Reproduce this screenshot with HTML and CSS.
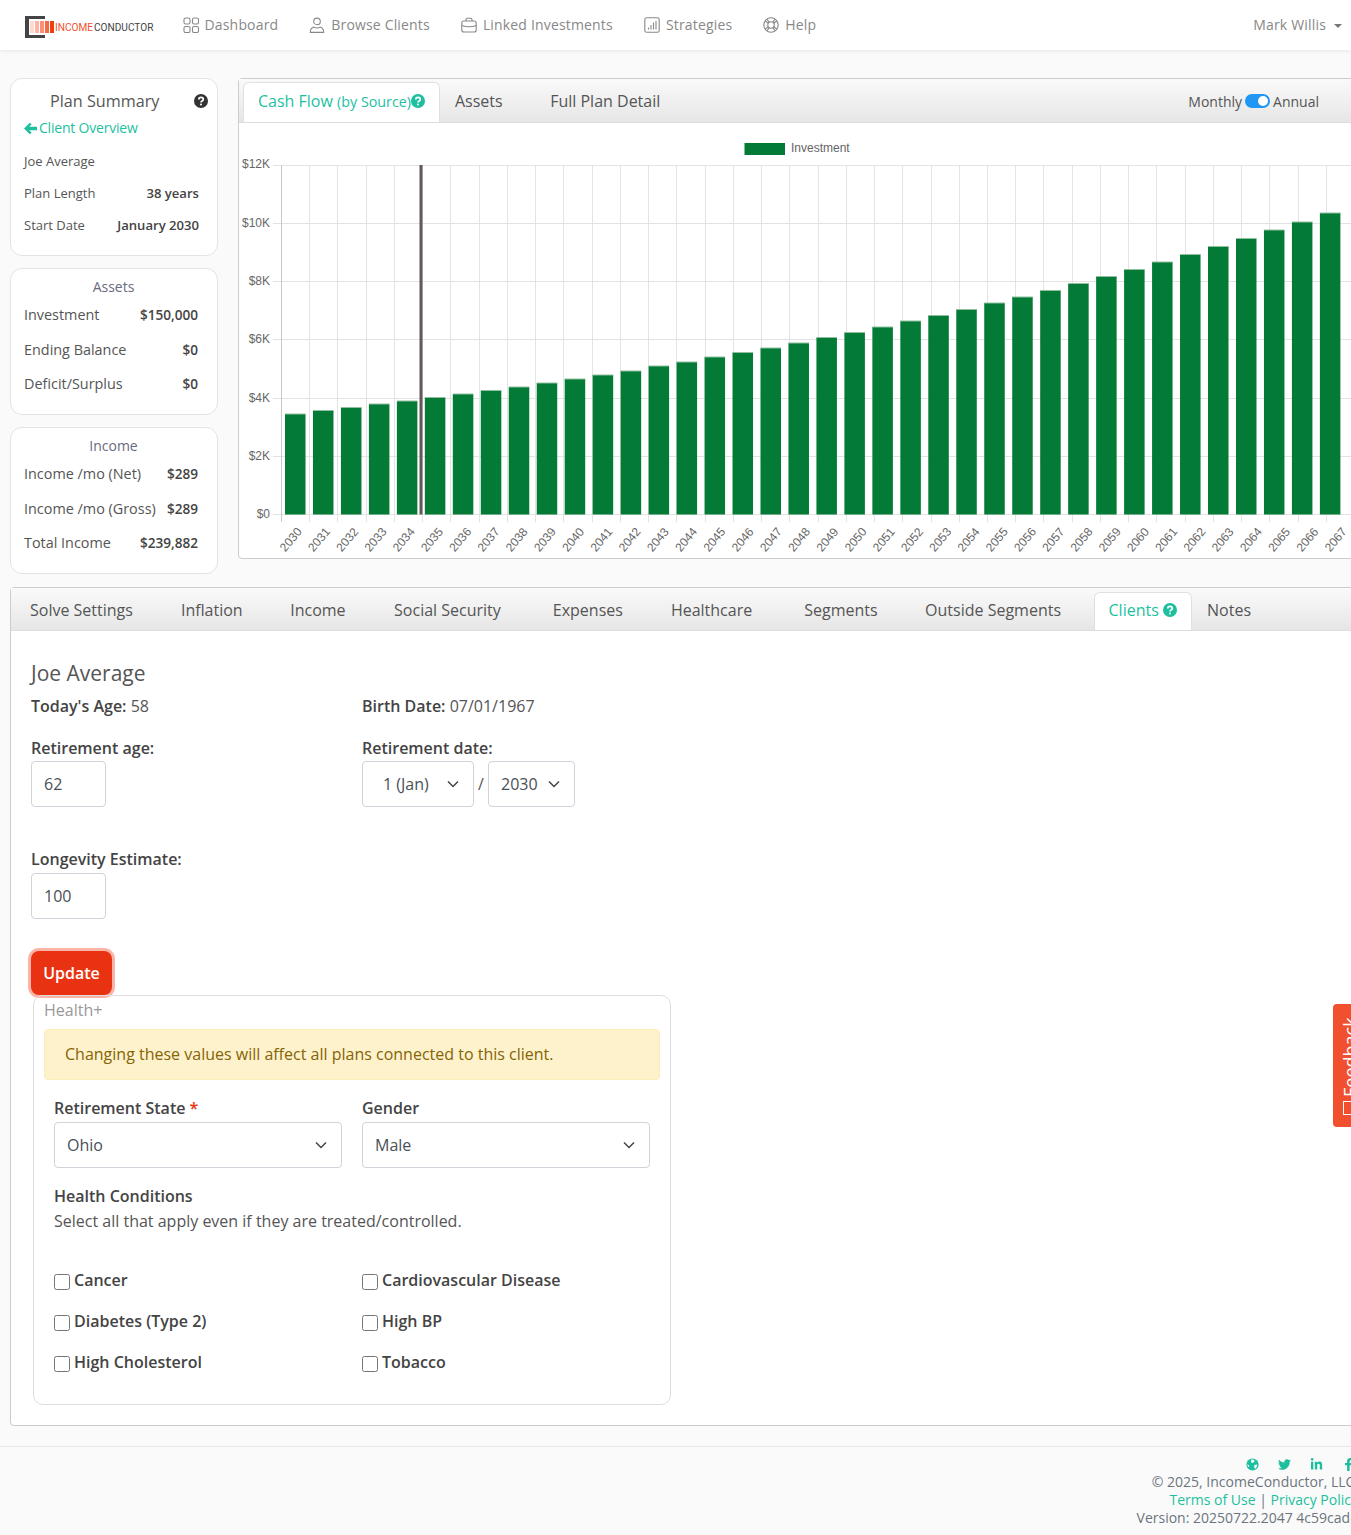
FILE: index.html
```html
<!DOCTYPE html>
<html lang="en">
<head>
    <meta charset="utf-8">
    <meta name="viewport" content="width=device-width, initial-scale=1.0">
    <title>Income Conductor</title>
    <link rel="stylesheet" href="styles.css">
</head>
<body>
    <nav class="navbar">
        <a class="logo">
            <span class="logo-mark"><i class="b1"></i><i class="b2"></i><i class="b3"></i><i class="b4"></i><i class="b5"></i></span>
            <span class="logo-income">INCOME</span><span class="logo-conductor">CONDUCTOR</span>
        </a>
        <a class="nav-link">
            <svg class="nav-icon" viewBox="0 0 16 16"><rect x="1" y="1" width="6" height="6" rx="1.6"/><rect x="9.5" y="1" width="6" height="6" rx="1.6"/><rect x="1" y="9.5" width="6" height="6" rx="1.6"/><rect x="9.5" y="9.5" width="6" height="6" rx="1.6"/></svg>
            Dashboard
        </a>
        <a class="nav-link">
            <svg class="nav-icon" viewBox="0 0 16 16"><circle cx="8" cy="4.4" r="3.3"/><path d="M1.3 15.4c-.5-3 2.3-5.3 3.6-5.3.9.6 1.9.9 3.1.9s2.2-.3 3.1-.9c1.3 0 4.1 2.3 3.6 5.3z"/></svg>
            Browse Clients
        </a>
        <a class="nav-link">
            <svg class="nav-icon" viewBox="0 0 16 16"><rect x=".8" y="4" width="14.4" height="11" rx="2"/><path d="M5 4V2.5C5 1.7 5.6 1.2 6.3 1.2h3.4c.7 0 1.3.5 1.3 1.3V4M.8 8.5c4.5 1.6 9.9 1.6 14.4 0"/></svg>
            Linked Investments
        </a>
        <a class="nav-link">
            <svg class="nav-icon" viewBox="0 0 16 16"><rect x=".8" y=".8" width="14.4" height="14.4" rx="1.8"/><path d="M4.5 12.5v-2M7 12.5V8M9.5 12.5v-7M12 12.5V4"/></svg>
            Strategies
        </a>
        <a class="nav-link">
            <svg class="nav-icon" viewBox="0 0 16 16"><circle cx="8" cy="8" r="7.2"/><circle cx="8" cy="8" r="3.2"/><path d="M2.2 4l3.2 2.2M4 2.2l2.2 3.2M13.8 4l-3.2 2.2M12 2.2L9.8 5.4M2.2 12l3.2-2.2M4 13.8l2.2-3.2M13.8 12l-3.2-2.2M12 13.8l-2.2-3.2"/></svg>
            Help
        </a>
        <a class="nav-user">Mark Willis <span class="caret"></span></a>
    </nav>

    <div class="content">
        <div class="top-row">
            <aside class="sidebar">
                <section class="card summary-card">
                    <div class="summary-head">
                        <h3>Plan Summary</h3>
                        <svg class="help-icon dark" viewBox="0 0 16 16"><circle cx="8" cy="8" r="8"/><path d="M5.5 6.2c0-3.1 5.1-3.1 5.1 0 0 1.9-2.6 1.8-2.6 3.4"/><circle class="dot" cx="8" cy="12" r="1.1"/></svg>
                    </div>
                    <a class="back-link"><svg class="back-arrow" viewBox="0 0 14 14"><path d="M0 7l6.3-6.3 1.9 1.9L5.6 5H14v4H5.6l2.6 2.4-1.9 1.9z"/></svg>Client Overview</a>
                    <div class="summary-row">Joe Average</div>
                    <div class="summary-row">Plan Length <b>38 years</b></div>
                    <div class="summary-row">Start Date <b>January 2030</b></div>
                </section>
                <section class="card stat-card">
                    <h4>Assets</h4>
                    <div class="stat-row">Investment <b>$150,000</b></div>
                    <div class="stat-row">Ending Balance <b>$0</b></div>
                    <div class="stat-row">Deficit/Surplus <b>$0</b></div>
                </section>
                <section class="card stat-card">
                    <h4>Income</h4>
                    <div class="stat-row">Income /mo (Net) <b>$289</b></div>
                    <div class="stat-row">Income /mo (Gross) <b>$289</b></div>
                    <div class="stat-row">Total Income <b>$239,882</b></div>
                </section>
            </aside>

            <section class="panel chart-panel">
                <div class="tabbar tabbar-top">
                    <a class="tab active cash-tab">Cash Flow <small>(by Source)</small><svg class="help-icon" viewBox="0 0 16 16"><circle cx="8" cy="8" r="8"/><path d="M5.5 6.2c0-3.1 5.1-3.1 5.1 0 0 1.9-2.6 1.8-2.6 3.4"/><circle class="dot" cx="8" cy="12" r="1.1"/></svg></a>
                    <a class="tab assets-tab">Assets</a>
                    <a class="tab">Full Plan Detail</a>
                    <div class="period-toggle">Monthly <span class="switch"><i></i></span> Annual</div>
                </div>
                <div id="chart" class="chart"></div>
            </section>
        </div>

        <section class="panel settings-panel">
            <div class="tabbar tabbar-bottom">
                <a class="tab t-solve">Solve Settings</a>
                <a class="tab t-inflation">Inflation</a>
                <a class="tab t-income">Income</a>
                <a class="tab t-social">Social Security</a>
                <a class="tab t-expenses">Expenses</a>
                <a class="tab t-health">Healthcare</a>
                <a class="tab t-segments">Segments</a>
                <a class="tab t-outside">Outside Segments</a>
                <a class="tab active t-clients">Clients <svg class="help-icon" viewBox="0 0 16 16"><circle cx="8" cy="8" r="8"/><path d="M5.5 6.2c0-3.1 5.1-3.1 5.1 0 0 1.9-2.6 1.8-2.6 3.4"/><circle class="dot" cx="8" cy="12" r="1.1"/></svg></a>
                <a class="tab t-notes">Notes</a>
            </div>
            <div class="client-form">
                <h2>Joe Average</h2>
                <div class="form-line info-line">
                    <div><b>Today's Age:</b> 58</div>
                    <div><b>Birth Date:</b> 07/01/1967</div>
                </div>
                <div class="form-line retire-line">
                    <div>
                        <label>Retirement age:</label>
                        <input class="field short" type="text" value="62">
                    </div>
                    <div>
                        <label>Retirement date:</label>
                        <div class="date-selects">
                            <div class="field select month-select">1 (Jan)<svg class="chev" viewBox="0 0 12 8"><path d="M1 1.5l5 5 5-5"/></svg></div>
                            <span class="slash">/</span>
                            <div class="field select year-select">2030<svg class="chev" viewBox="0 0 12 8"><path d="M1 1.5l5 5 5-5"/></svg></div>
                        </div>
                    </div>
                </div>
                <div class="longevity">
                    <label>Longevity Estimate:</label>
                    <input class="field short" type="text" value="100">
                </div>
                <button class="btn-update" type="button">Update</button>
                <fieldset class="health-box">
                    <div class="health-title">Health+</div>
                    <div class="alert">Changing these values will affect all plans connected to this client.</div>
                    <div class="health-grid">
                        <div>
                            <label>Retirement State <span class="req">*</span></label>
                            <div class="field select">Ohio<svg class="chev" viewBox="0 0 12 8"><path d="M1 1.5l5 5 5-5"/></svg></div>
                        </div>
                        <div>
                            <label>Gender</label>
                            <div class="field select">Male<svg class="chev" viewBox="0 0 12 8"><path d="M1 1.5l5 5 5-5"/></svg></div>
                        </div>
                    </div>
                    <div class="conditions">
                        <b>Health Conditions</b>
                        <p>Select all that apply even if they are treated/controlled.</p>
                    </div>
                    <div class="check-grid">
                        <label class="check"><input type="checkbox">Cancer</label>
                        <label class="check"><input type="checkbox">Cardiovascular Disease</label>
                        <label class="check"><input type="checkbox">Diabetes (Type 2)</label>
                        <label class="check"><input type="checkbox">High BP</label>
                        <label class="check"><input type="checkbox">High Cholesterol</label>
                        <label class="check"><input type="checkbox">Tobacco</label>
                    </div>
                </fieldset>
            </div>
        </section>
    </div>

    <footer class="footer">
        <div class="social">
            <svg viewBox="0 0 16 16"><circle cx="8" cy="8" r="7.5"/><path class="cut" d="M7 1.5l3 1 .5 2-2.5 1.5-2-1zM10.5 8.500L14 8l-1 3.5-2 2-1-3zM1.5 7.5l2 1.5.5 2-1.5-.5z"/></svg>
            <svg viewBox="0 0 512 512"><path d="M459.37 151.716c.325 4.548.325 9.097.325 13.645 0 138.72-105.583 298.558-298.558 298.558-59.452 0-114.68-17.219-161.137-47.106 8.447.974 16.568 1.299 25.34 1.299 49.055 0 94.213-16.568 130.274-44.832-46.132-.975-84.792-31.188-98.112-72.772 6.498.974 12.995 1.624 19.818 1.624 9.421 0 18.843-1.3 27.614-3.573-48.081-9.747-84.143-51.98-84.143-102.985v-1.299c13.969 7.797 30.214 12.67 47.431 13.319-28.264-18.843-46.781-51.005-46.781-87.391 0-19.492 5.197-37.36 14.294-52.954 51.655 63.675 129.3 105.258 216.365 109.807-1.624-7.797-2.599-15.918-2.599-24.04 0-57.828 46.782-104.934 104.934-104.934 30.213 0 57.502 12.67 76.67 33.137 23.715-4.548 46.456-13.32 66.599-25.34-7.798 24.366-24.366 44.833-46.132 57.827 21.117-2.273 41.584-8.122 60.426-16.243-14.292 20.791-32.161 39.308-52.628 54.253z"/></svg>
            <svg viewBox="0 0 448 512"><path d="M100.28 448H7.4V148.9h92.88zM53.79 108.1C24.09 108.1 0 83.5 0 53.8a53.79 53.79 0 0 1 107.58 0c0 29.7-24.1 54.3-53.79 54.3zM447.9 448h-92.68V302.4c0-34.7-.7-79.2-48.29-79.2-48.29 0-55.69 37.7-55.69 76.7V448h-92.78V148.9h89.08v40.8h1.3c12.4-23.5 42.69-48.3 87.88-48.3 94 0 111.28 61.9 111.28 142.3V448z"/></svg>
            <svg viewBox="0 0 320 512"><path d="M279.14 288l14.22-92.66h-88.91v-60.13c0-25.35 12.42-50.06 52.24-50.06h40.42V6.26S260.43 0 225.36 0c-73.22 0-121.08 44.38-121.08 124.72v70.62H22.89V288h81.39v224h100.17V288z"/></svg>
        </div>
        <div>© 2025, IncomeConductor, LLC.</div>
        <div><a>Terms of Use</a> | <a>Privacy Policy</a></div>
        <div>Version: 20250722.2047 4c59cade</div>
    </footer>

    <a class="feedback"><span class="feedback-box"></span>Feedback</a>

    <script src="chart.js"></script>
</body>
</html>
```

FILE: styles.css
```css
* {
    box-sizing: border-box;
}

html, body {
    overflow-x: hidden;
}

body {
    position: relative;
    margin: 0;
    width: 1351px;
    min-height: 1535px;
    background-color: #fafafa;
    font-family: "Open Sans", sans-serif;
    font-size: 16px;
    color: #555;
}

/* navbar */
.navbar {
    display: flex;
    align-items: center;
    height: 50px;
    padding-left: 25px;
    background-color: #fff;
    box-shadow: 0 1px 4px rgba(0, 0, 0, 0.08);
    width: 1351px;
}

.logo {
    display: flex;
    align-items: center;
    width: 157.5px;
    margin-top: 4px;
    font-family: Roboto, sans-serif;
    font-size: 10.1px;
    white-space: nowrap;
}

.logo-mark {
    display: flex;
    gap: 1px;
    align-items: center;
    width: 30px;
    height: 22px;
    padding-left: 5px;
    background: linear-gradient(#444, #444) left top / 20px 3px no-repeat,
        linear-gradient(#444, #444) left bottom / 20px 3px no-repeat,
        linear-gradient(#444, #444) left top / 4px 22px no-repeat;
}

.logo-mark i {
    display: block;
    flex-shrink: 0;
    width: 4px;
    height: 12px;
}

.logo-mark .b1 { background-color: #fdd9cf; }
.logo-mark .b2 { background-color: #fcb5a2; }
.logo-mark .b3 { background-color: #fa9176; }
.logo-mark .b4 { background-color: #f66a43; }
.logo-mark .b5 { background-color: #ef3e12; }

.logo-income {
    color: #f0512d;
    margin-right: 1px;
}

.logo-conductor {
    color: #444;
}

.nav-link {
    display: flex;
    align-items: center;
    gap: 6px;
    margin-right: 31px;
    padding-bottom: 2px;
    font-size: 14px;
    letter-spacing: 0.17px;
    color: #888;
    white-space: nowrap;
}

.nav-icon {
    width: 16px;
    height: 16px;
    margin-top: 2px;
    fill: none;
    stroke: #888;
    stroke-width: 1.1;
}

.nav-user {
    margin-left: auto;
    margin-right: 9px;
    padding-bottom: 2px;
    font-size: 14px;
    letter-spacing: 0.2px;
    color: #888;
}

.caret {
    display: inline-block;
    margin-left: 4px;
    vertical-align: 2px;
    border-top: 4px solid #777;
    border-left: 4px solid transparent;
    border-right: 4px solid transparent;
}

/* page */
.content {
    padding: 28px 0 0 10px;
    width: 1420px;
}

.top-row {
    display: flex;
    gap: 20px;
}

.sidebar {
    width: 208px;
    flex-shrink: 0;
}

.card {
    background-color: #fff;
    border: 1px solid #e3e3e3;
    border-radius: 12px;
    padding: 0 18px 0 13px;
    margin-bottom: 12px;
}

.card:last-child {
    margin-bottom: 0;
}

.summary-card {
    height: 178px;
}

.summary-head {
    display: flex;
    align-items: center;
    justify-content: space-between;
    padding: 10px 0 0 26px;
    margin-right: -9px;
}

.summary-head h3 {
    margin: 0;
    font-size: 16.2px;
    font-weight: 400;
    line-height: 24px;
}

.help-icon {
    width: 14px;
    height: 14px;
    fill: #1dbf9f;
    stroke: #fff;
    stroke-width: 2;
    flex-shrink: 0;
}

.help-icon circle:first-child {
    stroke: none;
}

.help-icon path {
    fill: none;
}

.help-icon .dot {
    fill: #fff;
    stroke: none;
}

.help-icon.dark {
    fill: #333;
}

.back-link {
    display: flex;
    align-items: center;
    gap: 2px;
    font-size: 14px;
    line-height: 20px;
    letter-spacing: -0.2px;
    color: #1dbf9f;
    margin-top: 5px;
}

.back-arrow {
    width: 13px;
    height: 13px;
    fill: #1dbf9f;
}

.summary-row {
    display: flex;
    justify-content: space-between;
    font-size: 13px;
    line-height: 18px;
    margin-top: 14px;
}

.summary-row b, .stat-row b {
    font-weight: 600;
    color: #444;
}

.summary-row b {
    font-size: 13.1px;
}

.stat-card {
    height: 147px;
    padding: 8px 19px 0 13px;
}

.stat-card h4 {
    margin: 0 0 8px;
    font-size: 14px;
    font-weight: 400;
    line-height: 20px;
    text-align: center;
    color: #6a6a80;
    padding-left: 5px;
}

.stat-row {
    display: flex;
    justify-content: space-between;
    font-size: 14.4px;
    line-height: 20px;
    margin-bottom: 14.5px;
    white-space: nowrap;
}

.stat-row b {
    font-size: 13.6px;
}

.panel {
    background-color: #fff;
    border: 1px solid #ccc;
    border-radius: 4px;
}

.chart-panel {
    width: 1180px;
    height: 481px;
    flex-shrink: 0;
}

.tabbar {
    display: flex;
    height: 43px;
    background: linear-gradient(#fafafa, #e6e6e6);
    border-bottom: 1px solid #ddd;
    font-size: 16px;
    white-space: nowrap;
}

.tab {
    display: block;
    line-height: 44px;
    color: #555;
}

.tab.active {
    background-color: #fff;
    color: #1dbf9f;
    border: 1px solid #e0e0e0;
    border-bottom: none;
    border-radius: 6px 6px 0 0;
}

.tabbar-top {
    height: 44px;
    padding-left: 4px;
    align-items: flex-end;
}

.tabbar-top .tab {
    height: 39px;
    line-height: 37px;
}

.tabbar-top .tab.active {
    height: 40px;
    width: 197px;
    padding-left: 14px;
    line-height: 36px;
}

.cash-tab small {
    font-size: 14.3px;
}

.cash-tab .help-icon {
    vertical-align: -1px;
}

.assets-tab {
    margin-left: 15px;
    margin-right: 47.5px;
}

.period-toggle {
    display: flex;
    align-items: center;
    gap: 3px;
    margin-left: auto;
    margin-right: 98px;
    height: 42px;
    font-size: 14px;
    color: #555;
}

.switch {
    position: relative;
    display: block;
    width: 25px;
    height: 14px;
    border-radius: 7px;
    background-color: #2196f3;
}

.switch i {
    position: absolute;
    top: 2px;
    right: 2px;
    width: 10px;
    height: 10px;
    border-radius: 50%;
    background-color: #fff;
}

.chart svg {
    display: block;
}

.settings-panel {
    margin-top: 13px;
    height: 839px;
}

.tabbar-bottom {
    padding-left: 19px;
    align-items: flex-end;
}

.tabbar-bottom .tab {
    height: 42px;
}

.tabbar-bottom .tab.active {
    height: 38px;
    line-height: 34px;
    padding: 0 13px 0 14px;
    width: 98px;
}

.t-solve, .t-expenses { margin-right: 48px; }
.t-inflation, .t-segments { margin-right: 47.5px; }
.t-income { margin-right: 48.5px; }
.t-social, .t-health { margin-right: 52px; }
.t-outside { margin-right: 32.5px; }
.t-clients { margin-right: 15.5px; }

.t-clients .help-icon {
    vertical-align: -1px;
}

.client-form {
    padding: 26px 0 0 20px;
    font-size: 16px;
}

.client-form h2 {
    margin: 0 0 5px;
    font-size: 21px;
    font-weight: 400;
    line-height: 32px;
}

.client-form b, .client-form label {
    font-weight: 600;
    color: #444;
}

.form-line {
    display: grid;
    grid-template-columns: 331px 1fr;
}

.info-line {
    line-height: 24px;
}

.retire-line {
    margin-top: 18px;
}

.client-form label {
    display: block;
    line-height: 24px;
    margin-bottom: 1px;
}

.field {
    display: block;
    height: 46px;
    padding: 0 14px 0 12px;
    border: 1px solid #ced4da;
    border-radius: 4px;
    background-color: #fff;
    font-family: inherit;
    font-size: 16px;
    color: #495057;
}

.short {
    width: 75px;
}

.select {
    display: flex;
    align-items: center;
    justify-content: space-between;
}

.chev {
    width: 12px;
    height: 8px;
    fill: none;
    stroke: #444;
    stroke-width: 1.5;
}

.date-selects {
    display: flex;
    align-items: center;
}

.month-select {
    width: 112px;
    padding: 0 14px 0 20px;
}

.year-select {
    width: 87px;
    padding: 0 14px 0 12px;
}

.slash {
    width: 14px;
    text-align: center;
}

.longevity {
    margin-top: 40px;
}

.longevity label {
    margin-bottom: 2px;
}

.btn-update {
    display: block;
    width: 81px;
    height: 44px;
    margin: 32px 0 0 0;
    padding: 0;
    border: none;
    border-radius: 8px;
    background-color: #e83211;
    box-shadow: 0 0 0 3px #fdb4a8;
    color: #fff;
    font-family: inherit;
    font-size: 16px;
    font-weight: 600;
}

.health-box {
    width: 638px;
    height: 410px;
    margin: 0 0 0 2px;
    padding: 2px 10px 0;
    border: 1px solid #ddd;
    border-radius: 10px;
}

.health-title {
    line-height: 24px;
    color: #999;
}

.alert {
    height: 51px;
    margin-top: 7px;
    padding-left: 20px;
    line-height: 49px;
    background-color: #fef2cd;
    border: 1px solid #fdedb9;
    border-radius: 4px;
    color: #856404;
}

.health-grid {
    display: grid;
    grid-template-columns: 288px 288px;
    gap: 20px;
    margin: 16px 0 0 10px;
}

.health-grid label {
    margin-bottom: 2px;
}

.req {
    color: #e83211;
}

.conditions {
    margin: 16px 0 0 10px;
    line-height: 25px;
}

.conditions p {
    margin: 0;
}

.check-grid {
    display: grid;
    grid-template-columns: 308px 1fr;
    row-gap: 17px;
    margin: 34px 0 0 10px;
}

.client-form .check {
    display: flex;
    align-items: center;
    margin: 0;
    line-height: 24px;
}

.check input {
    width: 16px;
    height: 16px;
    margin: 3px 4px 0 0;
}

/* footer */
.footer {
    margin-top: 20px;
    width: 1400px;
    padding: 8px 42px 0 0;
    border-top: 1px solid #e8e8e8;
    text-align: right;
    font-size: 14px;
    line-height: 18px;
    color: #6c757d;
}

.footer a {
    color: #1dbf9f;
}

.social {
    display: flex;
    justify-content: flex-end;
    align-items: center;
    gap: 19px;
    height: 18px;
    margin-right: 3px;
}

.social svg {
    width: 13px;
    height: 13px;
    fill: #1dbf9f;
}

.social .cut {
    fill: #fff;
}

/* feedback tab */
.feedback {
    position: absolute;
    top: 1004px;
    left: 1333px;
    display: flex;
    align-items: flex-start;
    gap: 4px;
    width: 50px;
    height: 123px;
    padding: 12px 6px 0 0;
    writing-mode: vertical-rl;
    transform: rotate(180deg);
    border-radius: 0 4px 4px 0;
    background-color: #f0502e;
    color: #fff;
    font-size: 18px;
    font-weight: 500;
    line-height: 22px;
    white-space: nowrap;
}

.feedback-box {
    width: 14px;
    height: 14px;
    margin-right: 4px;
    border: 1.5px solid #fff;
}
```

FILE: chart.js
```js
const barTops = [414, 410.5, 407.5, 404, 401, 397.5, 394, 390.5, 387, 383, 379, 375, 371, 366, 362, 357, 352.5, 348, 343, 337.5, 332.5, 327, 321, 315.5, 309.5, 303, 297, 290.5, 283.5, 276.5, 269.5, 262, 254.5, 246.5, 238.5, 230, 222, 213];

const gridRows = [514, 456, 398, 339, 281, 223, 165];
const plotLeft = 281;
const gridStep = 28.24;
const barLeft = 285;
const barStep = 27.97;
const plotTop = 165;
const plotBottom = 514;

let out = '';

out += '<rect x="744.5" y="143" width="40.5" height="12" fill="#037a35"/>';
out += '<text x="791" y="152">Investment</text>';

gridRows.forEach(function (row, i) {
    const y = row + 0.5;
    // the top label sits a pixel higher than the rest
    const labelY = i === 6 ? y + 2.5 : y + 3.5;
    out += `<line x1="273" x2="1390" y1="${y}" y2="${y}" stroke="#e3e3e3"/>`;
    out += `<text x="270" y="${labelY}" text-anchor="end">$${i ? (i * 2) + 'K' : '0'}</text>`;
});

for (let i = 0; i <= barTops.length; i++) {
    const x = Math.round(plotLeft + i * gridStep) + 0.5;
    out += `<line x1="${x}" x2="${x}" y1="${plotTop}" y2="522" stroke="${i ? '#e3e3e3' : '#c8c8c8'}"/>`;
}

barTops.forEach(function (barTop, i) {
    const x = barLeft + i * barStep;
    out += `<rect x="${x}" y="${barTop}" width="20.5" height="${plotBottom + 0.5 - barTop}" fill="#037a35"/>`;
    out += `<line x1="${x}" x2="${x + 20.5}" y1="${barTop}" y2="${barTop}" stroke="#8fbf9f"/>`;
    const tx = plotLeft + i * gridStep + 21.5;
    out += `<text x="${tx}" y="532" text-anchor="end" transform="rotate(-50 ${tx} 532)">${2030 + i}</text>`;
});

out += '<rect x="419.5" y="165" width="3" height="349.5" fill="#655659"/>';

document.getElementById('chart').innerHTML =
    `<svg width="1178" height="436" viewBox="239 123 1178 436" font-family="Liberation Sans, sans-serif" font-size="12" fill="#666">${out}</svg>`;
```
